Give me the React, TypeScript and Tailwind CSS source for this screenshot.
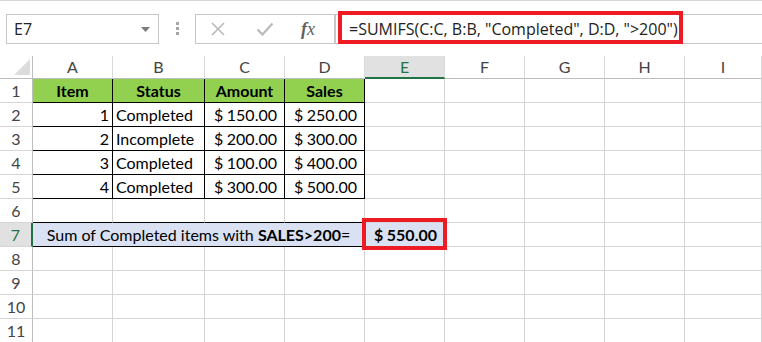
import React from "react";

const COLS = ["A", "B", "C", "D", "E", "F", "G", "H", "I"];
const W = ["w-[80px]", "w-[92px]", "w-[80px]", "w-[80px]", "w-[80px]", "w-[80px]", "w-[80px]", "w-[80px]", "w-[77px]"];

const data = [
  ["1", "Completed", "150.00", "250.00"],
  ["2", "Incomplete", "200.00", "300.00"],
  ["3", "Completed", "100.00", "400.00"],
  ["4", "Completed", "300.00", "500.00"],
];

const cellFont = "font-['Lato','Liberation_Sans',sans-serif] text-[16px] text-black";

function RowHead({ n, active }: { n: number; active?: boolean }) {
  return (
    <div
      className={
        "w-[33px] h-full shrink-0 flex items-center justify-center border-b border-[#d4d4d4] text-[16px] font-['Lato','Liberation_Sans',sans-serif] " +
        (active
          ? "bg-[#e1e1e1] border-r-2 border-r-[#217346] text-[#217346]"
          : "bg-white border-r border-r-[#bdbdbd] text-[#444]")
      }
    >
      {n}
    </div>
  );
}

function Empty({ w, extra = "" }: { w: string; extra?: string }) {
  return <div className={`${w} h-full shrink-0 border-r border-b border-[#d4d4d4] ${extra}`} />;
}

function Money({ v, bold }: { v: string; bold?: boolean }) {
  return (
    <div className={`flex w-full justify-between pl-[9px] pr-[7px] ${bold ? "font-bold" : ""}`}>
      <span>$</span>
      <span>{v}</span>
    </div>
  );
}

export default function App() {
  return (
    <div className="w-[762px] h-[342px] bg-white overflow-hidden relative">
      {/* top line */}
      <div className="h-[2px] border-t border-[#d6d6d6]" />
      {/* formula bar */}
      <div className="flex items-start mt-[12px] h-[30px]">
        <div className="ml-[6px] w-[153px] h-[30px] border border-[#c6c6c6] flex items-center justify-between pl-[7px] pr-[8px] font-['Open_Sans','Liberation_Sans',sans-serif] text-[16px] text-[#222]">
          <span>E7</span>
          <svg width="9" height="5" viewBox="0 0 9 5">
            <path d="M0 0 L9 0 L4.5 5 Z" fill="#7a7a7a" />
          </svg>
        </div>
        <div className="ml-[17px] w-[3px] mt-[8px] flex flex-col gap-[2px]">
          <div className="w-[3px] h-[3px] bg-[#a6a6a6]" />
          <div className="w-[3px] h-[3px] bg-[#a6a6a6]" />
          <div className="w-[3px] h-[3px] bg-[#a6a6a6]" />
        </div>
        <div className="ml-[16px] w-[140px] h-[30px] border border-[#c6c6c6] flex items-center">
          <svg className="ml-[15px]" width="14" height="14" viewBox="0 0 14 14">
            <path d="M1 1 L13 13 M13 1 L1 13" stroke="#b9b9b9" strokeWidth="1.6" fill="none" />
          </svg>
          <svg className="ml-[31px]" width="18" height="14" viewBox="0 0 18 14">
            <path d="M1.5 7.5 L6.5 12.5 L16.5 1.5" stroke="#b9b9b9" strokeWidth="2.2" fill="none" />
          </svg>
          <span className="ml-[27px] font-['Liberation_Serif',serif] italic text-[18px] text-[#5f5f5f] leading-none">
            <span className="font-bold">f</span>x
          </span>
        </div>
        <div className="flex-1 h-[30px] border-t border-b border-l border-[#c6c6c6] flex items-center pl-[13px] font-['Open_Sans','Liberation_Sans',sans-serif] text-[16px] text-[#222] whitespace-nowrap">
          =SUMIFS(C:C, B:B, "Completed", D:D, "&gt;200")
        </div>
      </div>

      {/* grid */}
      <div className="mt-[12px]">
        {/* column header */}
        <div className="flex h-[23px]">
          <div className="w-[33px] shrink-0 h-full border-r border-b border-[#bdbdbd] relative">
            <svg className="absolute left-[14px] top-[3px]" width="16" height="16" viewBox="0 0 16 16">
              <path d="M16 0 L16 16 L0 16 Z" fill="#dcdcdc" />
            </svg>
          </div>
          {COLS.map((c, i) => (
            <div
              key={c}
              className={`${W[i]} shrink-0 h-full flex items-center justify-center text-[16px] font-['Lato','Liberation_Sans',sans-serif] border-r border-[#dadada] ${
                c === "E"
                  ? "bg-[#e1e1e1] border-b-2 border-b-[#217346] text-[#217346]"
                  : "bg-white border-b border-b-[#bdbdbd] text-[#444]"
              }`}
            >
              {c}
            </div>
          ))}
        </div>

        {/* row 1 */}
        <div className={`flex h-[24px] ${cellFont}`}>
          <RowHead n={1} />
          {["Item", "Status", "Amount", "Sales"].map((t, i) => (
            <div
              key={t}
              className={`${W[i]} shrink-0 h-full bg-[#92d050] border-r border-b border-black flex items-center justify-center font-bold`}
            >
              {t}
            </div>
          ))}
          {[4, 5, 6, 7, 8].map((i) => (
            <Empty key={i} w={W[i]} />
          ))}
        </div>

        {/* rows 2-5 */}
        {data.map((r, ri) => (
          <div key={ri} className={`flex h-[24px] ${cellFont}`}>
            <RowHead n={ri + 2} />
            <div className={`${W[0]} shrink-0 h-full border-r border-b border-black flex items-center justify-end pr-[3px]`}>
              {r[0]}
            </div>
            <div className={`${W[1]} shrink-0 h-full border-r border-b border-black flex items-center pl-[3px] whitespace-nowrap`}>
              {r[1]}
            </div>
            <div className={`${W[2]} shrink-0 h-full border-r border-b border-black flex items-center`}>
              <Money v={r[2]} />
            </div>
            <div className={`${W[3]} shrink-0 h-full border-r border-b border-black flex items-center`}>
              <Money v={r[3]} />
            </div>
            {[4, 5, 6, 7, 8].map((i) => (
              <Empty key={i} w={W[i]} />
            ))}
          </div>
        ))}

        {/* row 6 */}
        <div className={`flex h-[24px] ${cellFont}`}>
          <RowHead n={6} />
          {[0, 1, 2].map((i) => (
            <div key={i} className={`${W[i]} shrink-0 h-full border-r border-[#d4d4d4] border-b border-b-black`} />
          ))}
          <div className={`${W[3]} shrink-0 h-full border-r border-[#d4d4d4] border-b border-b-black`} />
          {[4, 5, 6, 7, 8].map((i) => (
            <Empty key={i} w={W[i]} />
          ))}
        </div>

        {/* row 7 */}
        <div className={`flex h-[24px] ${cellFont}`}>
          <RowHead n={7} active />
          <div className="w-[332px] shrink-0 h-full bg-[#d9e1f2] border-r border-b border-black flex items-center justify-center whitespace-nowrap">
            <span>
              Sum of Completed items with <span className="font-bold">SALES&gt;200</span>=
            </span>
          </div>
          <div className={`${W[4]} shrink-0 h-full bg-[#d9e1f2] border-r border-b border-[#d4d4d4] flex items-center`}>
            <Money v="550.00" bold />
          </div>
          {[5, 6, 7, 8].map((i) => (
            <Empty key={i} w={W[i]} />
          ))}
        </div>

        {/* rows 8-11 */}
        {[8, 9, 10, 11].map((n) => (
          <div key={n} className={`flex h-[24px] ${cellFont}`}>
            <RowHead n={n} />
            {[0, 1, 2, 3, 4, 5, 6, 7, 8].map((i) => (
              <Empty key={i} w={W[i]} />
            ))}
          </div>
        ))}
      </div>

      {/* annotation boxes */}
      <div className="absolute left-[338px] top-[11px] w-[345px] h-[33px] border-4 border-[#ed1c24]" />
      <div className="absolute left-[362px] top-[218px] w-[85px] h-[32px] border-4 border-[#ed1c24]" />
    </div>
  );
}
